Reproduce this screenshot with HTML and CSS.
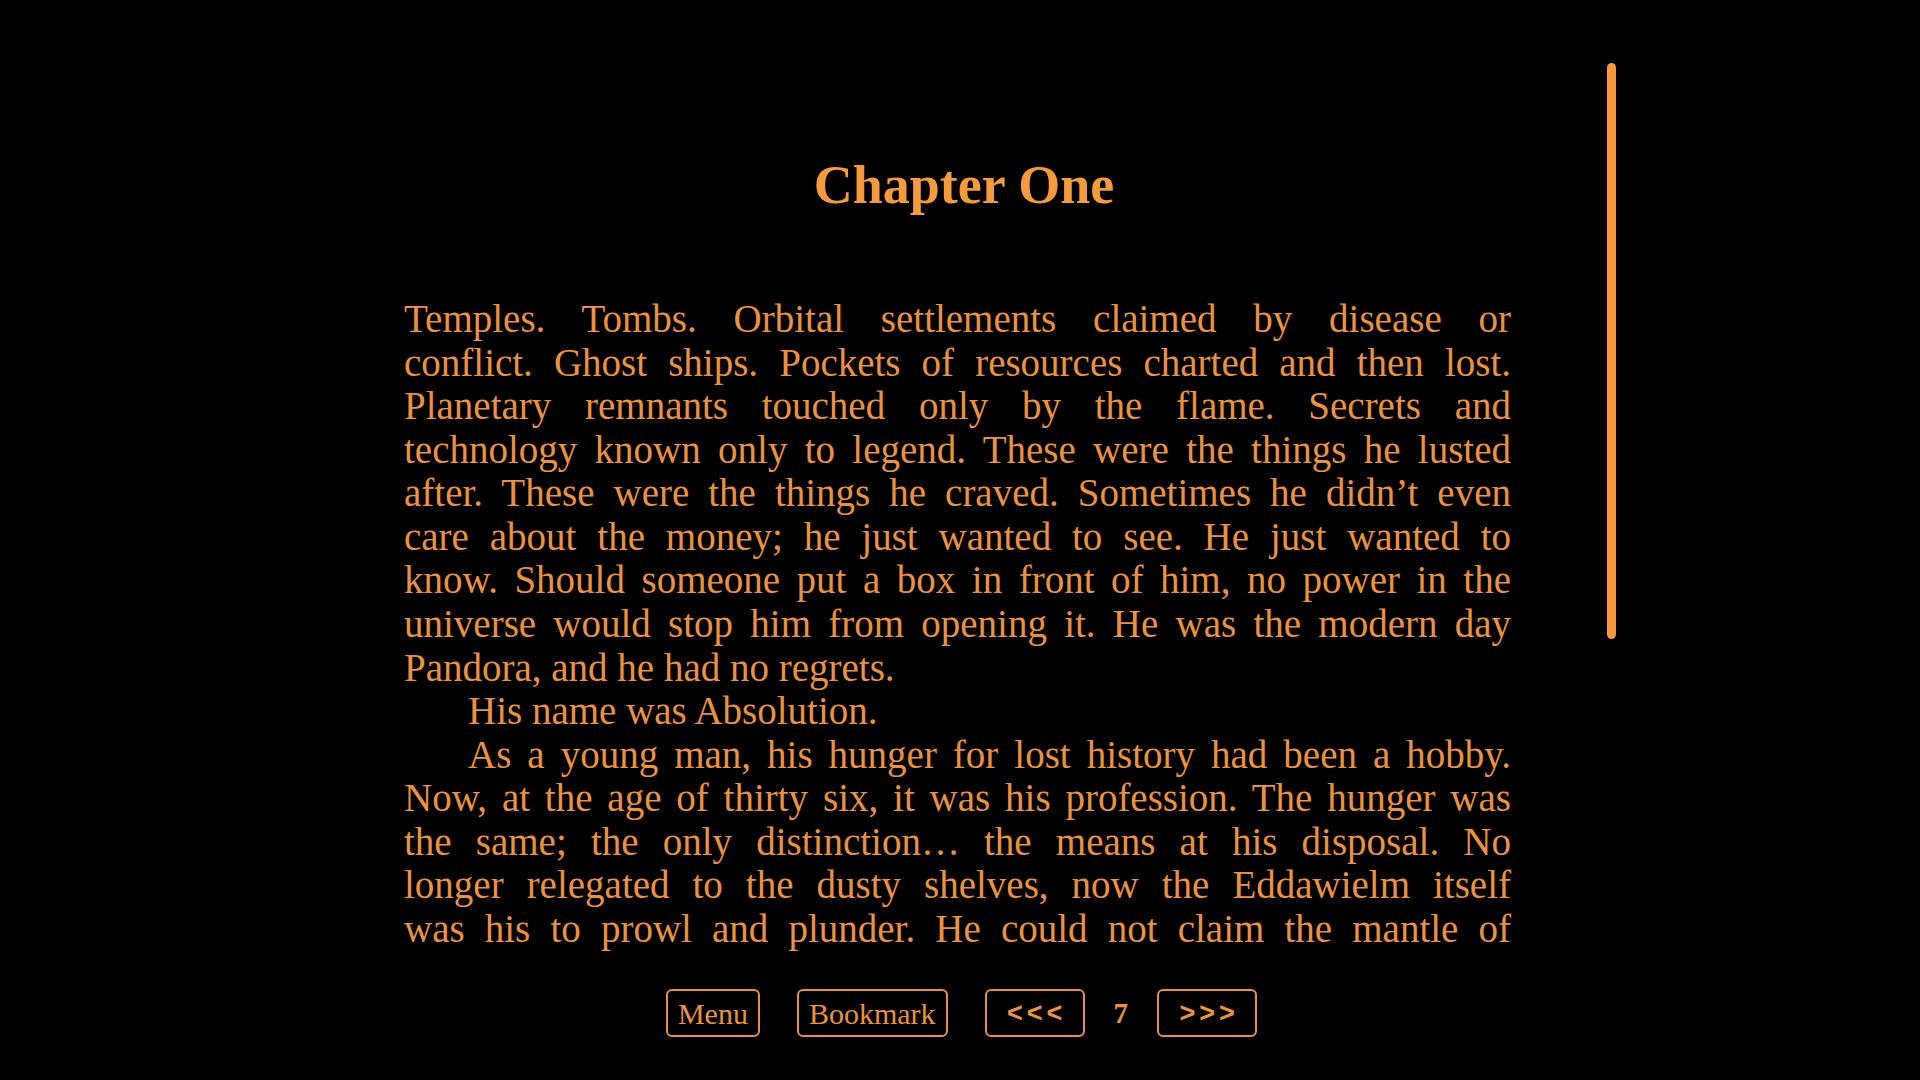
FILE: index.html
```html
<!DOCTYPE html>
<html lang="en">
<head>
<meta charset="utf-8">
<title>Chapter One</title>
<link rel="stylesheet" href="styles.css">
</head>
<body>
<div class="reader">
  <main class="page">
    <h1 class="chapter-title">Chapter One</h1>
    <div class="chapter-text">
      <p class="para">
        <span class="line">Temples. Tombs. Orbital settlements claimed by disease or</span>
        <span class="line">conflict. Ghost ships. Pockets of resources charted and then lost.</span>
        <span class="line">Planetary remnants touched only by the flame. Secrets and</span>
        <span class="line">technology known only to legend. These were the things he lusted</span>
        <span class="line">after. These were the things he craved. Sometimes he didn’t even</span>
        <span class="line">care about the money; he just wanted to see. He just wanted to</span>
        <span class="line">know. Should someone put a box in front of him, no power in the</span>
        <span class="line">universe would stop him from opening it. He was the modern day</span>
        <span class="line last">Pandora, and he had no regrets.</span>
      </p>
      <p class="para">
        <span class="line last indent">His name was Absolution.</span>
      </p>
      <p class="para">
        <span class="line indent">As a young man, his hunger for lost history had been a hobby.</span>
        <span class="line">Now, at the age of thirty six, it was his profession. The hunger was</span>
        <span class="line">the same; the only distinction… the means at his disposal. No</span>
        <span class="line">longer relegated to the dusty shelves, now the Eddawielm itself</span>
        <span class="line">was his to prowl and plunder. He could not claim the mantle of</span>
      </p>
    </div>
    <nav class="controls">
      <button class="btn btn-text">Menu</button>
      <button class="btn btn-text">Bookmark</button>
      <div class="pager">
        <button class="btn btn-arrow">&lt;&lt;&lt;</button>
        <span class="page-num">7</span>
        <button class="btn btn-arrow">&gt;&gt;&gt;</button>
      </div>
    </nav>
  </main>
  <div class="scroll-thumb"></div>
</div>
</body>
</html>
```
FILE: styles.css
```css
html, body {
  margin: 0;
  padding: 0;
  background: #000;
}
body {
  width: 1920px;
  height: 1080px;
  overflow: hidden;
  font-family: "Liberation Serif", "DejaVu Serif", serif;
  color: #eb923f;
}
.reader {
  position: relative;
  width: 1920px;
  height: 1080px;
}
.page {
  width: 1107px;
  margin-left: 404px;
  padding-top: 153px;
  display: flex;
  flex-direction: column;
}
.chapter-title {
  margin: 0 0 80px 0;
  font-size: 54px;
  line-height: 64px;
  font-weight: 700;
  text-align: center;
  color: #f59b3c;
  padding-left: 13px;
}
.chapter-text {
  font-size: 39px;
  line-height: 43.56px;
}
.para {
  margin: 0;
}
.line {
  display: block;
  text-align: justify;
  text-align-last: justify;
}
.line.last {
  text-align: left;
  text-align-last: left;
}
.line.indent {
  text-indent: 64px;
}
.controls {
  margin-top: 39px;
  display: flex;
  justify-content: center;
  align-items: center;
  gap: 37px;
  padding-left: 8px;
}
.pager {
  display: flex;
  align-items: center;
  gap: 29px;
}
.btn {
  background: #000;
  color: #eb923f;
  border: 2.5px solid #e8903c;
  border-radius: 6px;
  height: 48px;
  margin: 0;
  font-family: "Liberation Serif", "DejaVu Serif", serif;
  cursor: pointer;
}
.btn-text {
  padding: 0 10px;
  font-size: 30px;
  line-height: 43px;
}
.btn-arrow {
  width: 100px;
  padding: 0 0 0 4px;
  font-family: "Liberation Sans", "DejaVu Sans", sans-serif;
  font-size: 27px;
  font-weight: 700;
  letter-spacing: 4px;
  line-height: 43px;
}
.page-num {
  font-size: 29px;
  font-weight: 700;
  color: #eb923f;
}
.scroll-thumb {
  position: absolute;
  left: 1607px;
  top: 63px;
  width: 9px;
  height: 576px;
  border-radius: 5px;
  background: #f7993a;
}
```
